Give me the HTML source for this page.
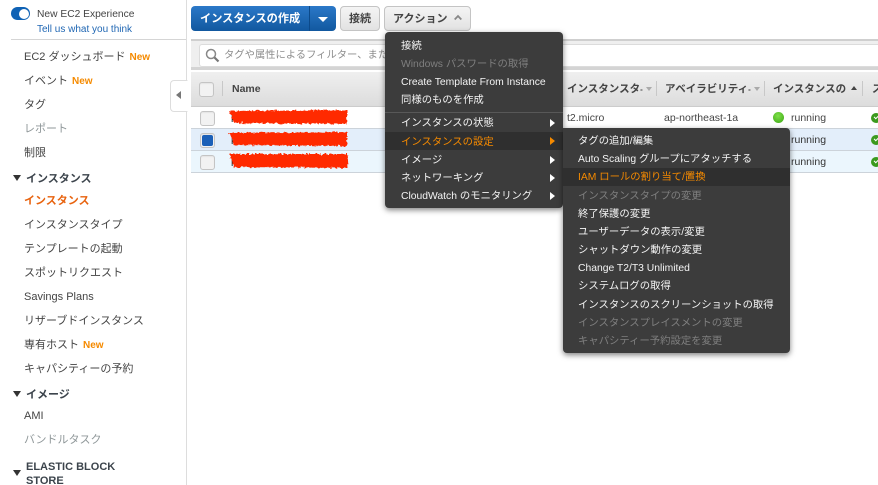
<!DOCTYPE html>
<html><head><meta charset="utf-8">
<style>
html,body{margin:0;padding:0;width:878px;height:485px;overflow:hidden;background:#fff}
#r{position:relative;width:878px;height:485px;overflow:hidden;font-family:"Liberation Sans","Noto Sans CJK JP",sans-serif;font-size:11px;color:#444;filter:blur(.35px)}
.a,.t{position:absolute}
.t{white-space:nowrap;line-height:16px;height:16px}
.s{color:#444}
.g{color:#8f9799}
.b{font-weight:bold}
.n{color:#f58a00;font-weight:bold;font-size:10px;margin-left:4px}
.tri{position:absolute;width:0;height:0;border-left:4.5px solid transparent;border-right:4.5px solid transparent;border-top:6px solid #333}
.btn{position:absolute;top:6px;height:23px;border:1px solid #c4c4c4;border-radius:4px;background:linear-gradient(#f4f4f4,#e2e2e2);text-align:center;line-height:24px;font-weight:bold;color:#444;font-size:11px}
.cb{position:absolute;width:13px;height:13px;border:1px solid #c4c4c4;border-radius:3px;background:#f2f2f2;box-shadow:inset 0 1px 1px #e4e4e4}
.menu{position:absolute;background:#3c3c3c;border-radius:4px;box-shadow:0 2px 6px rgba(0,0,0,.5);color:#fff;font-size:10.35px}
.menu .t{left:16px;color:#f4f4f4;height:18px;line-height:18px}
.menu .d{color:#7f7f7f}
.menu .o{color:#f58a00}
.hl{position:absolute;background:#2f2f2f;left:0;right:0;height:18px}
.ar{position:absolute;width:0;height:0;border-top:4px solid transparent;border-bottom:4px solid transparent;border-left:5px solid #fff;left:165px}
.hd{font-weight:bold;font-size:10.5px;color:#444}
.sep{position:absolute;top:81px;width:1px;height:15px;background:#c8c8c8}
.row{position:absolute;left:191px;right:0;height:21px;border-bottom:1px solid #ccd3da}
.c{color:#444;font-size:10.5px}
.dn{position:absolute;width:0;height:0;border-left:3px solid transparent;border-right:3px solid transparent;border-top:4px solid #aaa}
.ok{position:absolute;left:871px;width:10px;height:10px;border-radius:50%;background:#3c9a1e}
.ok:after{content:"";position:absolute;left:2.5px;top:2px;width:4px;height:2px;border-left:1.5px solid #fff;border-bottom:1.5px solid #fff;transform:rotate(-45deg)}
.dot{position:absolute;left:773px;top:112px;width:11px;height:11px;border-radius:50%;background:radial-gradient(circle at 45% 35%,#7fe04a,#3aa512)}
</style></head><body><div id="r">

<!-- sidebar -->
<div class="a" style="left:186px;top:0;width:1px;height:485px;background:#ddd"></div>
<div class="a" style="left:11px;top:7px;width:19px;height:13px;border-radius:7px;background:#0f62b5"></div>
<div class="a" style="left:18.5px;top:8.5px;width:10px;height:10px;border-radius:50%;background:#fff"></div>
<div class="t" style="left:37px;top:7px;font-size:10.25px;color:#444">New EC2 Experience</div>
<div class="t" style="left:37px;top:22px;font-size:10px;color:#1f66b3">Tell us what you think</div>
<div class="a" style="left:11px;top:39px;width:175px;height:1px;background:#d5d5d5"></div>

<div class="t" style="left:24px;top:49px">EC2 ダッシュボード<span class="n">New</span></div>
<div class="t" style="left:24px;top:73px">イベント<span class="n">New</span></div>
<div class="t" style="left:24px;top:97px">タグ</div>
<div class="t g" style="left:24px;top:121px">レポート</div>
<div class="t" style="left:24px;top:145px">制限</div>

<div class="a" style="left:170px;top:80px;width:16px;height:30px;background:#fff;border:1px solid #ddd;border-right:1px solid #fff;border-radius:4px 0 0 4px"></div>
<div class="a" style="left:176px;top:91px;width:0;height:0;border-top:4.5px solid transparent;border-bottom:4.5px solid transparent;border-right:5px solid #777"></div>

<div class="tri" style="left:13px;top:175px"></div>
<div class="t b" style="left:26px;top:171px;color:#3c444c">インスタンス</div>
<div class="t b" style="left:24px;top:193px;color:#e8630f">インスタンス</div>
<div class="t" style="left:24px;top:217px">インスタンスタイプ</div>
<div class="t" style="left:24px;top:241px">テンプレートの起動</div>
<div class="t" style="left:24px;top:265px">スポットリクエスト</div>
<div class="t" style="left:24px;top:289px">Savings Plans</div>
<div class="t" style="left:24px;top:313px">リザーブドインスタンス</div>
<div class="t" style="left:24px;top:337px">専有ホスト<span class="n">New</span></div>
<div class="t" style="left:24px;top:361px">キャパシティーの予約</div>
<div class="tri" style="left:13px;top:391px"></div>
<div class="t b" style="left:26px;top:387px;color:#3c444c">イメージ</div>
<div class="t" style="left:24px;top:408px">AMI</div>
<div class="t g" style="left:24px;top:432px">バンドルタスク</div>
<div class="tri" style="left:13px;top:470px"></div>
<div class="t b" style="left:26px;top:459px;color:#3c444c">ELASTIC BLOCK</div>
<div class="t b" style="left:26px;top:473px;color:#3c444c">STORE</div>

<!-- toolbar -->
<div class="a" style="left:191px;top:6px;width:145px;height:25px;border-radius:4px;background:linear-gradient(#2b78c8,#11589f);border:0"></div>
<div class="a" style="left:309px;top:6px;width:1px;height:25px;background:#0c4a8a"></div>
<div class="t b" style="left:200px;top:11px;color:#fff;font-size:11.2px">インスタンスの作成</div>
<div class="a" style="left:318px;top:17px;width:0;height:0;border-left:5px solid transparent;border-right:5px solid transparent;border-top:5px solid #fff"></div>
<div class="btn" style="left:340px;width:38px">接続</div>
<div class="btn" style="left:384px;width:85px;text-align:left;text-indent:8px">アクション</div>
<svg class="a" style="left:454px;top:14px" width="8" height="7" viewBox="0 0 8 7"><path d="M.7 5.5 L4 2 L7.3 5.5" fill="none" stroke="#888" stroke-width="1.8"/></svg>

<!-- filter bar -->
<div class="a" style="left:191px;top:39px;right:0;height:31px;background:#efefef;border-top:2px solid #cfcfcf;box-sizing:border-box"></div>
<div class="a" style="left:199px;top:44px;right:0;height:23px;background:#fff;border:1px solid #dcdcdc;border-right:0;border-radius:3px 0 0 3px;box-sizing:border-box"></div>
<div class="a" style="left:191px;top:67px;right:0;height:3px;background:#d4d4d4"></div>
<svg class="a" style="left:205px;top:48px" width="15" height="15" viewBox="0 0 15 15"><circle cx="6" cy="6" r="4.5" fill="none" stroke="#888" stroke-width="1.5"/><path d="M9.5 9.5 L13.5 13.5" stroke="#777" stroke-width="2.2"/></svg>
<div class="t g" style="left:224px;top:48px;font-size:10.3px;color:#8c8c8c">タグや属性によるフィルター、またはキーワード検索</div>

<!-- header -->
<div class="a" style="left:191px;top:72px;right:0;height:35px;background:linear-gradient(#efefef,#dcdcdc);border-bottom:1px solid #ccc;box-sizing:border-box"></div>
<div class="cb" style="left:199px;top:82px"></div>
<div class="sep" style="left:222px"></div>
<div class="t hd" style="left:232px;top:81px">Name</div>
<div class="t hd" style="left:567px;top:81px">インスタンスタ<span style="font-size:8px">-</span></div>
<div class="dn" style="left:646px;top:87px"></div>
<div class="sep" style="left:656px"></div>
<div class="t hd" style="left:665px;top:81px">アベイラビリティ<span style="font-size:8px">-</span></div>
<div class="dn" style="left:754px;top:87px"></div>
<div class="sep" style="left:764px"></div>
<div class="t hd" style="left:773px;top:81px">インスタンスの</div>
<div class="a" style="left:851px;top:86px;width:0;height:0;border-left:3px solid transparent;border-right:3px solid transparent;border-bottom:4px solid #444"></div>
<div class="sep" style="left:862px"></div>
<div class="t hd" style="left:872px;top:81px">ス</div>

<!-- rows -->
<div class="row" style="top:107px;background:#fff"></div>
<div class="row" style="top:129px;background:#e3eefa"></div>
<div class="row" style="top:151px;background:#ebf6fd"></div>
<div class="cb" style="left:200px;top:111px"></div>
<div class="cb" style="left:200px;top:133px"></div>
<div class="a" style="left:202px;top:135px;width:11px;height:11px;border-radius:2px;background:#1b60b8"></div>
<div class="cb" style="left:200px;top:155px"></div>

<div class="t c" style="left:231px;top:111px;color:#222">k</div>
<div class="t c" style="left:231px;top:133px;color:#222">k</div>
<div class="t c" style="left:231px;top:155px;color:#222">k</div>
<svg class="a" style="left:224px;top:106px" width="128" height="66" viewBox="0 0 128 66">
<defs><filter id="f" x="-5%" y="-20%" width="110%" height="140%"><feTurbulence type="fractalNoise" baseFrequency=".35" numOctaves="2" seed="4"/><feDisplacementMap in="SourceGraphic" scale="4" xChannelSelector="R" yChannelSelector="G"/></filter></defs>
<g fill="#ff2a00" filter="url(#f)">
<path d="M5 5 L123 4 L123 18 L10 17 L8 11Z"/>
<path d="M5 27 L123 26 L123 40 L10 39 L8 33Z"/>
<path d="M5 48 L123 48 L124 62 L10 61 L8 55Z"/>
</g></svg>

<div class="t c" style="left:567px;top:110px">t2.micro</div>
<div class="t c" style="left:664px;top:110px">ap-northeast-1a</div>
<div class="dot"></div>
<div class="t c" style="left:791px;top:110px">running</div>
<div class="t c" style="left:791px;top:132px;color:#333">running</div>
<div class="t c" style="left:791px;top:154px;color:#333">running</div>
<div class="ok" style="top:113px"></div>
<div class="ok" style="top:135px"></div>
<div class="ok" style="top:157px"></div>

<!-- main menu -->
<div class="menu" style="left:385px;top:32px;width:178px;height:176px">
 <div class="t" style="top:6px">接続</div>
 <div class="t d" style="top:24px">Windows パスワードの取得</div>
 <div class="t" style="top:42px">Create Template From Instance</div>
 <div class="t" style="top:60px">同様のものを作成</div>
 <div class="a" style="left:0;right:0;top:80px;height:1px;background:#585858"></div>
 <div class="t" style="top:83px">インスタンスの状態</div>
 <div class="hl" style="top:100px"></div>
 <div class="t o" style="top:102px">インスタンスの設定</div>
 <div class="t" style="top:120px">イメージ</div>
 <div class="t" style="top:138px">ネットワーキング</div>
 <div class="t" style="top:156px">CloudWatch のモニタリング</div>
 <div class="ar" style="top:87px"></div>
 <div class="ar" style="top:105px;border-left-color:#f58a00"></div>
 <div class="ar" style="top:124px"></div>
 <div class="ar" style="top:142px"></div>
 <div class="ar" style="top:160px"></div>
</div>

<!-- sub menu -->
<div class="menu" style="left:563px;top:128px;width:227px;height:225px;border-radius:0 4px 4px 4px">
 <div class="t" style="left:15px;top:5px">タグの追加/編集</div>
 <div class="t" style="left:15px;top:23px">Auto Scaling グループにアタッチする</div>
 <div class="hl" style="top:40px"></div>
 <div class="t o" style="left:15px;top:41px">IAM ロールの割り当て/置換</div>
 <div class="t d" style="left:15px;top:60px">インスタンスタイプの変更</div>
 <div class="t" style="left:15px;top:78px">終了保護の変更</div>
 <div class="t" style="left:15px;top:96px">ユーザーデータの表示/変更</div>
 <div class="t" style="left:15px;top:114px">シャットダウン動作の変更</div>
 <div class="t" style="left:15px;top:132px">Change T2/T3 Unlimited</div>
 <div class="t" style="left:15px;top:150px">システムログの取得</div>
 <div class="t" style="left:15px;top:169px">インスタンスのスクリーンショットの取得</div>
 <div class="t d" style="left:15px;top:187px">インスタンスプレイスメントの変更</div>
 <div class="t d" style="left:15px;top:205px">キャパシティー予約設定を変更</div>
</div>

</div></body></html>
